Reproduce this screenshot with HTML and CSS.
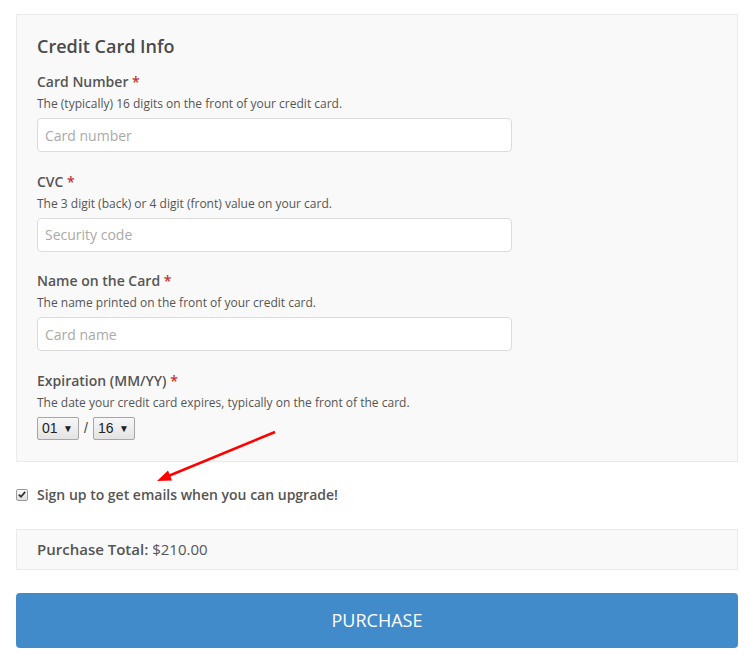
FILE: index.html
```html
<!DOCTYPE html>
<html>
<head>
<meta charset="utf-8">
<link rel="stylesheet" href="styles.css">
</head>
<body>
<div class="page">
  <div class="panel">
    <h3 class="title">Credit Card Info</h3>
    <div class="field">
      <div class="label">Card Number <span class="req">*</span></div>
      <div class="help">The (typically) 16 digits on the front of your credit card.</div>
      <input class="input" type="text" placeholder="Card number">
    </div>
    <div class="field">
      <div class="label">CVC <span class="req">*</span></div>
      <div class="help">The 3 digit (back) or 4 digit (front) value on your card.</div>
      <input class="input" type="text" placeholder="Security code">
    </div>
    <div class="field">
      <div class="label">Name on the Card <span class="req">*</span></div>
      <div class="help">The name printed on the front of your credit card.</div>
      <input class="input" type="text" placeholder="Card name">
    </div>
    <div class="field">
      <div class="label">Expiration (MM/YY) <span class="req">*</span></div>
      <div class="help">The date your credit card expires, typically on the front of the card.</div>
      <div class="exp">
        <div class="select"><span>01</span><span class="caret">&#9660;</span></div>
        <span class="slash">/</span>
        <div class="select"><span>16</span><span class="caret">&#9660;</span></div>
      </div>
    </div>
  </div>
  <div class="signup">
    <span class="check"><svg width="11" height="11" viewBox="0 0 11 11"><path d="M2 5.6 L4.4 8 L9 2.6" fill="none" stroke="#333" stroke-width="2"/></svg></span>
    <span class="signup-text">Sign up to get emails when you can upgrade!</span>
  </div>
  <div class="total"><b>Purchase Total:</b> $210.00</div>
  <button class="buy">PURCHASE</button>
  <svg class="arrow" width="754" height="667" viewBox="0 0 754 667">
    <line x1="275" y1="432" x2="166" y2="477" stroke="#f00" stroke-width="2.5"/>
    <polygon points="157,481 168,470.5 172,480.5" fill="#f00"/>
  </svg>
</div>
</body>
</html>
```
FILE: styles.css
```css
html, body {
  margin: 0;
  padding: 0;
  background: #fff;
}
body {
  font-family: "Open Sans", "Liberation Sans", sans-serif;
  color: #555;
}
.page {
  position: relative;
  padding: 14px 16px 0 16px;
  height: 653px;
}
.panel {
  background: #f9f9f9;
  border: 1px solid #ebebeb;
  padding: 18px 20px 21px 20px;
}
.title {
  margin: 0 0 13px 0;
  font-size: 18px;
  line-height: 26px;
  font-weight: 600;
  color: #4a4a4a;
}
.field + .field {
  margin-top: 19.5px;
}
.label {
  font-size: 14px;
  line-height: 20px;
  font-weight: 600;
  color: #555;
}
.req {
  color: #c9302c;
}
.help {
  font-size: 12px;
  line-height: 17px;
  margin: 3px 0 6px 0;
  color: #555;
}
.input {
  display: block;
  box-sizing: border-box;
  width: 475px;
  height: 34px;
  margin: 0;
  border: 1px solid #dcdcdc;
  border-radius: 4px;
  background: #fff;
  padding: 0 7px;
  font-family: "Open Sans", "Liberation Sans", sans-serif;
  font-size: 14px;
  color: #555;
  outline: none;
}
.input::placeholder {
  color: #aaa;
}
.exp {
  display: flex;
  align-items: center;
  height: 23px;
}
.select {
  box-sizing: border-box;
  height: 23px;
  width: 42px;
  border: 1px solid #a6a6a6;
  border-radius: 2px;
  background: linear-gradient(#f7f7f7, #e3e3e3);
  display: flex;
  align-items: center;
  justify-content: space-between;
  padding: 0 5px 0 4px;
  font-family: "Liberation Sans", Arial, sans-serif;
  font-size: 14px;
  color: #222;
}
.caret {
  font-size: 10px;
  color: #222;
}
.slash {
  font-family: "Liberation Sans", Arial, sans-serif;
  font-size: 14px;
  color: #444;
  margin: 0 5px 0 5px;
}
.signup {
  display: flex;
  align-items: center;
  margin-top: 23px;
  height: 20px;
}
.check {
  box-sizing: border-box;
  width: 12px;
  height: 12px;
  border: 1px solid #9a9a9a;
  border-radius: 2px;
  background: linear-gradient(#fcfcfc, #dedede);
  display: flex;
  align-items: center;
  justify-content: center;
  margin-right: 9px;
}
.check svg {
  display: block;
}
.signup-text {
  font-size: 14px;
  font-weight: 600;
  color: #555;
}
.total {
  margin-top: 24px;
  background: #f9f9f9;
  border: 1px solid #ebebeb;
  padding: 10px 20px;
  font-size: 15px;
  line-height: 19px;
  color: #555;
}
.total b {
  font-weight: 600;
}
.buy {
  display: block;
  width: 100%;
  margin-top: 23px;
  height: 55px;
  border: none;
  border-radius: 4px;
  background: #428bca;
  color: #fff;
  font-family: "Open Sans", "Liberation Sans", sans-serif;
  font-size: 18px;
  font-weight: 400;
}
.arrow {
  position: absolute;
  left: 0;
  top: 0;
  pointer-events: none;
}
```
